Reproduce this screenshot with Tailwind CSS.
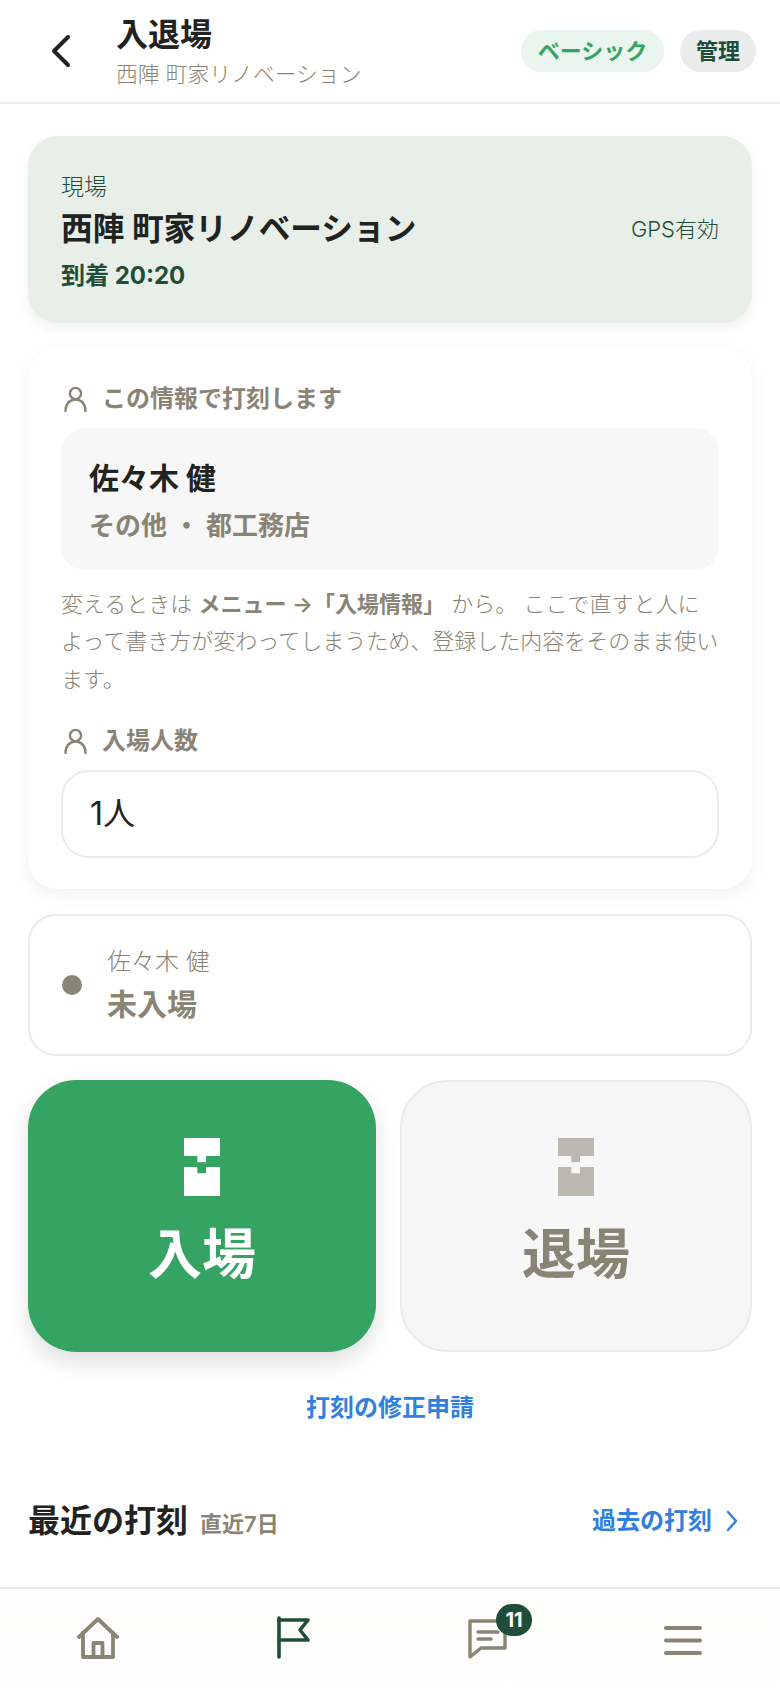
<!DOCTYPE html>
<html lang="ja">
<head>
  <meta charset="UTF-8" />
  <meta name="viewport" content="width=device-width, initial-scale=1.0" />
  <title>入退場</title>
  <script src="https://cdn.jsdelivr.net/npm/@tailwindcss/browser@4"></script>
</head>
<body class="bg-white font-['Inter','Noto_Sans_CJK_JP',sans-serif] text-[#222320]">
  <div class="flex h-[1688px] w-[780px] flex-col overflow-hidden">

    <!-- header -->
    <header class="flex h-[104px] shrink-0 items-center border-b-2 border-[#ececec] pr-6">
      <button class="ml-[49px] flex w-[67px] shrink-0 items-center">
        <svg width="24" height="34" viewBox="0 0 24 34" fill="none" stroke="#222320" stroke-width="4" stroke-linecap="round" stroke-linejoin="round"><path d="M19 3 5 17l14 14" /></svg>
      </button>
      <div class="flex-1">
        <h1 class="text-[32px] leading-[40px] font-bold">入退場</h1>
        <p class="mt-[5px] text-[21.8px] leading-[28px] font-light text-[#8a8474]">西陣 町家リノベーション</p>
      </div>
      <span class="flex h-[42px] w-[143px] items-center justify-center rounded-full bg-[#e9f5ee] text-[22px] font-semibold text-[#35a463]">ベーシック</span>
      <span class="ml-4 flex h-[42px] w-[76px] items-center justify-center rounded-full bg-[#e9ecea] text-[22px] font-semibold text-[#1f4d3a]">管理</span>
    </header>

    <main class="flex flex-1 flex-col px-[28px] pt-[32px]">
      <!-- site card -->
      <section class="flex h-[187px] shrink-0 items-center justify-between rounded-[30px] bg-[#e7efe8] px-[33px] shadow-[0_6px_14px_rgba(0,0,0,0.06)]">
        <div class="pt-[6px]">
          <p class="text-[23px] leading-[32px] font-light text-[#1f4d3a]">現場</p>
          <p class="mt-[3px] text-[31.7px] leading-[46px] font-bold">西陣 町家リノベーション</p>
          <p class="mt-[6px] text-[24px] leading-[36px] font-bold text-[#1f4d3a]">到着 20:20</p>
        </div>
        <span class="text-[22px] font-light text-[#1f4d3a]">GPS有効</span>
      </section>

      <!-- stamp info card -->
      <section class="mt-[25px] h-[541px] shrink-0 rounded-[30px] bg-white px-[33px] pt-[34px] shadow-[0_6px_18px_rgba(0,0,0,0.06)]">
        <div class="flex h-[34px] items-center gap-[14px] text-[#8a8474]">
          <svg class="ml-[2px]" width="25" height="26" viewBox="0 0 25 26" fill="none" stroke="#8a8474" stroke-width="2.4" stroke-linecap="round"><circle cx="12.5" cy="7.5" r="5.6" /><path d="M2.5 25c0-7 4-11.5 10-11.5S22.5 18 22.5 25" /></svg>
          <span class="text-[24px] font-semibold">この情報で打刻します</span>
        </div>
        <div class="mt-[12px] h-[142px] rounded-[24px] bg-[#f7f7f7] px-[28px] pt-[28px]">
          <p class="text-[30px] leading-[44px] font-bold">佐々木 健</p>
          <p class="mt-[4px] text-[26px] leading-[44px] font-semibold text-[#8a8474]">その他 ・ 都工務店</p>
        </div>
        <p class="mt-[16px] text-[22px] leading-[37.4px] font-light text-[#8a8474]">変えるときは <b class="font-semibold">メニュー →「入場情報」</b> から。 ここで直すと人によって書き方が変わってしまうため、登録した内容をそのまま使います。</p>
        <div class="mt-[26px] flex h-[34px] items-center gap-[14px] text-[#8a8474]">
          <svg class="ml-[2px]" width="25" height="26" viewBox="0 0 25 26" fill="none" stroke="#8a8474" stroke-width="2.4" stroke-linecap="round"><circle cx="12.5" cy="7.5" r="5.6" /><path d="M2.5 25c0-7 4-11.5 10-11.5S22.5 18 22.5 25" /></svg>
          <span class="text-[24px] font-semibold">入場人数</span>
        </div>
        <div class="mt-[12px] flex h-[88px] items-center rounded-[28px] border-2 border-[#ebebeb] px-[27px] text-[32px]">1人</div>
      </section>

      <!-- status -->
      <section class="mt-[25px] flex h-[142px] shrink-0 items-center gap-[25px] rounded-[28px] border-2 border-[#ebebeb] pl-[32px]">
        <span class="h-[20px] w-[20px] rounded-full bg-[#8a8474]"></span>
        <div class="text-[#8a8474]">
          <p class="text-[24px] leading-[36px] font-light">佐々木 健</p>
          <p class="mt-[2px] text-[30px] leading-[44px] font-bold">未入場</p>
        </div>
      </section>

      <!-- stamp buttons -->
      <div class="mt-[24px] flex h-[272px] shrink-0 gap-[24px]">
        <button class="flex w-[348px] flex-col items-center rounded-[48px] bg-[#35a463] pt-[58px] text-white shadow-[0_10px_22px_rgba(0,0,0,0.13)]">
          <svg width="36" height="58" viewBox="0 0 36 58"><path fill="#fff" d="M0 0h36v18H22v6.300h-8.700V18H0zM0 29h13.300v6.300H22V29h14v29H0z" /></svg>
          <span class="mt-[23px] text-[54px] leading-[72px] font-bold">入場</span>
        </button>
        <button class="flex w-[352px] flex-col items-center rounded-[48px] border-2 border-[#ebebeb] bg-[#f7f7f7] pt-[56px] text-[#8a8474]">
          <svg width="36" height="58" viewBox="0 0 36 58"><path fill="#bdb8ae" d="M0 0h36v18H22v6.300h-8.700V18H0zM0 29h13.300v6.300H22V29h14v29H0z" /></svg>
          <span class="mt-[23px] text-[54px] leading-[72px] font-bold">退場</span>
        </button>
      </div>

      <a class="mt-[39px] block text-center text-[24px] leading-[34px] font-semibold text-[#2f80e0]" href="#">打刻の修正申請</a>

      <div class="mt-[73px] flex items-center justify-between">
        <div class="flex items-baseline gap-[12px]">
          <h2 class="text-[32px] leading-[46px] font-bold">最近の打刻</h2>
          <span class="text-[22px] font-semibold text-[#8a8474]">直近7日</span>
        </div>
        <a class="flex items-center gap-[14px] pr-[14px] text-[24px] font-semibold text-[#2f80e0]" href="#">
          過去の打刻
          <svg width="12" height="22" viewBox="0 0 12 22" fill="none" stroke="#2f80e0" stroke-width="2.4" stroke-linecap="round" stroke-linejoin="round"><path d="m2 2 8 9-8 9" /></svg>
        </a>
      </div>
    </main>

    <!-- bottom nav -->
    <nav class="grid h-[101px] shrink-0 grid-cols-4 border-t-2 border-[#ececec] bg-gradient-to-b from-[#fdfcfb] to-white">
      <a class="flex justify-center pt-[28px]" href="#">
        <svg width="42" height="42" viewBox="0 0 42 42" fill="none" stroke="#8a8474" stroke-width="3.800" stroke-linecap="round" stroke-linejoin="round"><path d="M2 20 21 2l19 18" /><path d="M6 16v24h30V16" /><path d="M16.500 40V26h9v14" /></svg>
      </a>
      <a class="flex justify-center pt-[27px]" href="#">
        <svg width="36" height="44" viewBox="0 0 36 44" fill="none" stroke="#1f4d3a" stroke-width="3.600" stroke-linecap="round" stroke-linejoin="round"><path d="M4 2v39" /><path d="M4 4h29l-8 10 8 10H4" /></svg>
      </a>
      <a class="relative flex justify-center pt-[30px]" href="#">
        <svg width="40" height="40" viewBox="0 0 40 40" fill="none" stroke="#8a8474" stroke-width="3.400" stroke-linecap="round" stroke-linejoin="round"><path d="M2 2h35v27H13L2 38z" /><path d="M10 13h20M10 20h13" /></svg>
        <span class="absolute top-[15px] left-[106px] flex h-[32px] w-[36px] items-center justify-center rounded-full bg-[#1f4d3a] text-[20px] font-bold text-white">11</span>
      </a>
      <a class="flex justify-center pt-[36px]" href="#">
        <svg width="38" height="30" viewBox="0 0 38 30" fill="none" stroke="#8a8474" stroke-width="4" stroke-linecap="round"><path d="M2 3h34M2 15.500h34M2 28h34" /></svg>
      </a>
    </nav>
  </div>
</body>
</html>
